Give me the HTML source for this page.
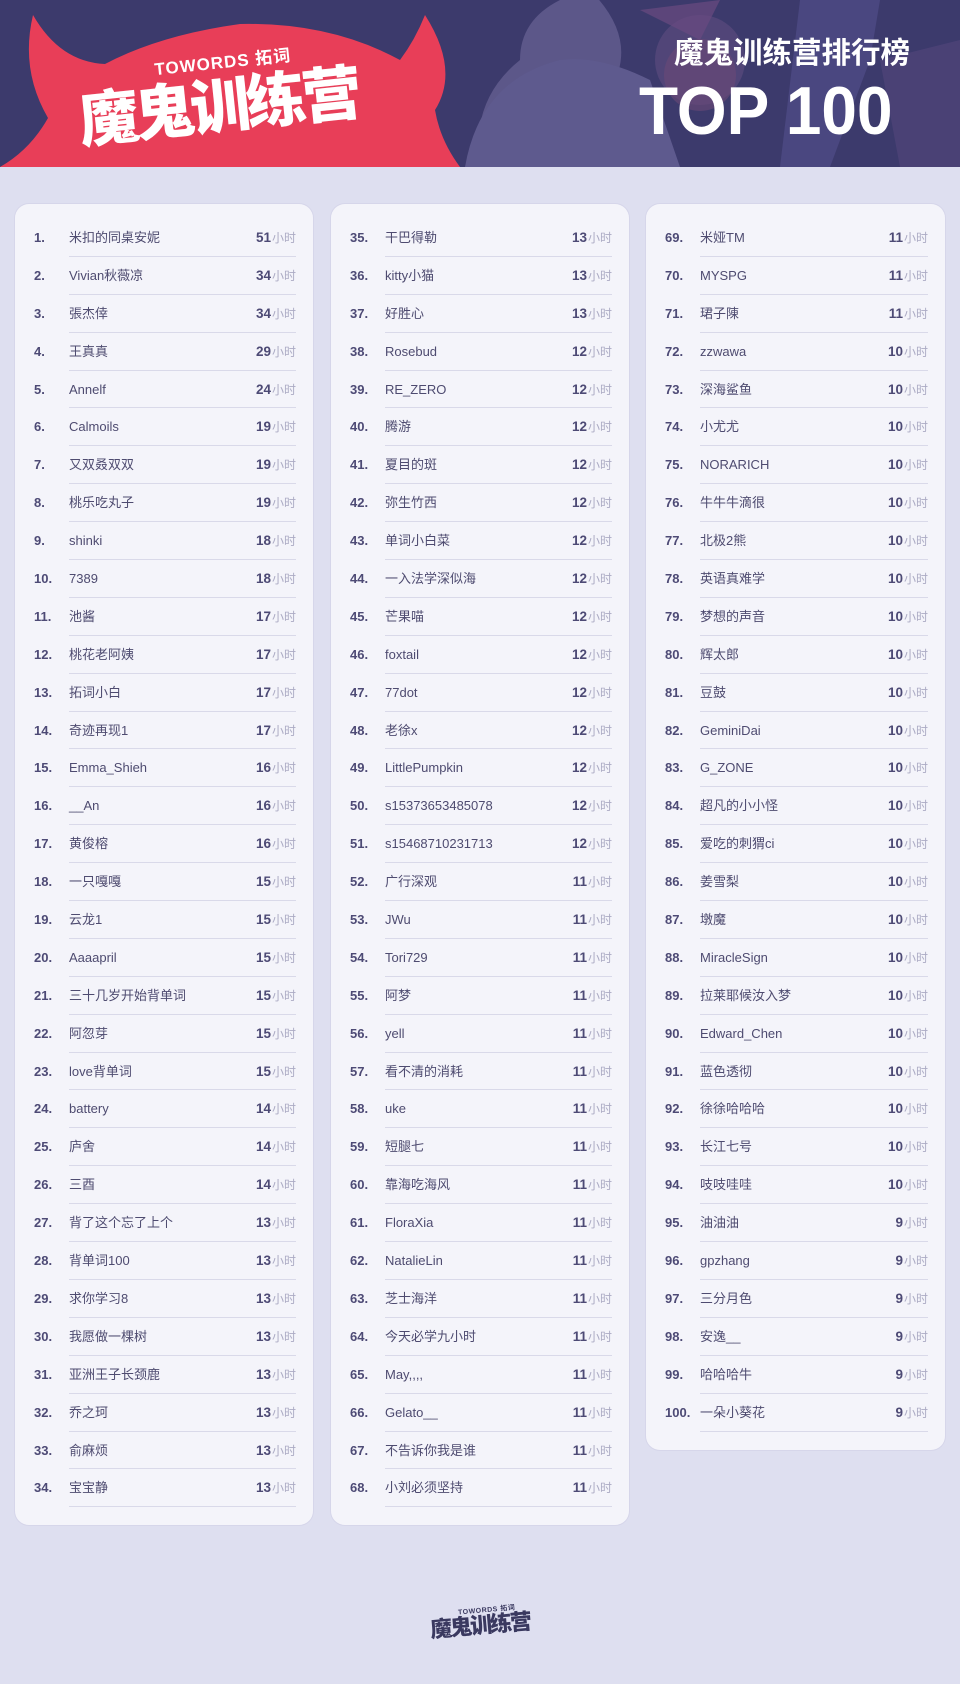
<!DOCTYPE html>
<html><head><meta charset="utf-8">
<style>
*{margin:0;padding:0;box-sizing:border-box}
body{width:960px;height:1684px;background:#dedff0;font-family:"Liberation Sans","Noto Sans CJK SC",sans-serif;position:relative;overflow:hidden}
.hdr{position:absolute;left:0;top:0;width:960px;height:167px;background:#3c3a6c;overflow:hidden}
.card{position:absolute;top:204px;background:#f4f4fa;border-radius:14px;padding-top:15px;box-shadow:0 0 0 1px #d6d6ea}
.r{height:37.9px;position:relative}
.n{position:absolute;left:19px;top:0;line-height:37.9px;font-size:13px;font-weight:bold;color:#4d4a75}
.m{position:absolute;left:54px;right:17px;top:0;height:37.9px;line-height:37.9px;font-size:13px;color:#4e4b70;border-bottom:1px solid #d9d9e9}
.h{position:absolute;right:0;top:0;font-size:13.5px;font-weight:bold;color:#4d4a75}
.h i{font-style:normal;font-weight:normal;font-size:12px;color:#acabc4;margin-left:1px}
</style></head><body>
<div class="hdr">
<svg width="960" height="167" style="position:absolute;left:0;top:0">
<circle cx="700" cy="60" r="45" fill="#5a4a7e" opacity=".7"/>
<circle cx="700" cy="75" r="36" fill="#6b4a77" opacity=".6"/>
<path d="M560 0 L590 -10 Q640 40 610 90 L640 167 L480 167 Q470 100 520 60 Q520 20 560 0Z" fill="#5c5789"/>
<path d="M465 167 Q480 80 560 60 Q600 55 650 80 L680 167Z" fill="#5e5a8e"/>
<path d="M800 0 L880 0 L870 60 L830 167 L780 167Z" fill="#4a4780"/>
<path d="M880 60 L960 40 L960 167 L900 167Z" fill="#4d4478" opacity=".8"/>
<path d="M640 10 L720 0 L700 40Z" fill="#6a4a80" opacity=".7"/>
<path d="M33 15 Q60 62 105 64 Q160 35 240 24 Q330 22 400 60 Q415 40 425 15 Q460 70 435 110 Q440 140 460 167 L0 167 Q30 150 48 118 Q20 70 33 15Z" fill="#e83e58"/>
</svg>
<div style="position:absolute;left:154px;top:48px;transform:rotate(-6deg);color:#fff;font-weight:bold;font-size:17px;letter-spacing:1px">TOWORDS 拓词</div>
<div style="position:absolute;left:78px;top:68px;transform:rotate(-6deg);color:#fff;font-weight:900;font-size:60px;line-height:70px;font-family:'Noto Sans CJK SC',sans-serif;letter-spacing:-4px">魔鬼训练营</div>
<div style="position:absolute;left:674px;top:32px;color:#fff;font-weight:bold;font-size:29.5px;line-height:38px;font-family:'Noto Sans CJK SC',sans-serif">魔鬼训练营排行榜</div>
<div style="position:absolute;left:639px;top:76px;color:#fff;font-weight:900;font-size:68px;line-height:70px;font-family:'Liberation Sans',sans-serif;letter-spacing:0;transform:scaleX(0.94);transform-origin:left">TOP 100</div>
</div>

<div class="card" style="left:15px;width:298px;height:1321px">
<div class="r"><span class="n">1.</span><div class="m">米扣的同桌安妮<span class="h">51<i>小时</i></span></div></div>
<div class="r"><span class="n">2.</span><div class="m">Vivian秋薇凉<span class="h">34<i>小时</i></span></div></div>
<div class="r"><span class="n">3.</span><div class="m">張杰倖<span class="h">34<i>小时</i></span></div></div>
<div class="r"><span class="n">4.</span><div class="m">王真真<span class="h">29<i>小时</i></span></div></div>
<div class="r"><span class="n">5.</span><div class="m">Annelf<span class="h">24<i>小时</i></span></div></div>
<div class="r"><span class="n">6.</span><div class="m">Calmoils<span class="h">19<i>小时</i></span></div></div>
<div class="r"><span class="n">7.</span><div class="m">又双叒双双<span class="h">19<i>小时</i></span></div></div>
<div class="r"><span class="n">8.</span><div class="m">桃乐吃丸子<span class="h">19<i>小时</i></span></div></div>
<div class="r"><span class="n">9.</span><div class="m">shinki<span class="h">18<i>小时</i></span></div></div>
<div class="r"><span class="n">10.</span><div class="m">7389<span class="h">18<i>小时</i></span></div></div>
<div class="r"><span class="n">11.</span><div class="m">池酱<span class="h">17<i>小时</i></span></div></div>
<div class="r"><span class="n">12.</span><div class="m">桃花老阿姨<span class="h">17<i>小时</i></span></div></div>
<div class="r"><span class="n">13.</span><div class="m">拓词小白<span class="h">17<i>小时</i></span></div></div>
<div class="r"><span class="n">14.</span><div class="m">奇迹再现1<span class="h">17<i>小时</i></span></div></div>
<div class="r"><span class="n">15.</span><div class="m">Emma_Shieh<span class="h">16<i>小时</i></span></div></div>
<div class="r"><span class="n">16.</span><div class="m">__An<span class="h">16<i>小时</i></span></div></div>
<div class="r"><span class="n">17.</span><div class="m">黄俊榕<span class="h">16<i>小时</i></span></div></div>
<div class="r"><span class="n">18.</span><div class="m">一只嘎嘎<span class="h">15<i>小时</i></span></div></div>
<div class="r"><span class="n">19.</span><div class="m">云龙1<span class="h">15<i>小时</i></span></div></div>
<div class="r"><span class="n">20.</span><div class="m">Aaaapril<span class="h">15<i>小时</i></span></div></div>
<div class="r"><span class="n">21.</span><div class="m">三十几岁开始背单词<span class="h">15<i>小时</i></span></div></div>
<div class="r"><span class="n">22.</span><div class="m">阿忽芽<span class="h">15<i>小时</i></span></div></div>
<div class="r"><span class="n">23.</span><div class="m">love背单词<span class="h">15<i>小时</i></span></div></div>
<div class="r"><span class="n">24.</span><div class="m">battery<span class="h">14<i>小时</i></span></div></div>
<div class="r"><span class="n">25.</span><div class="m">庐舍<span class="h">14<i>小时</i></span></div></div>
<div class="r"><span class="n">26.</span><div class="m">三酉<span class="h">14<i>小时</i></span></div></div>
<div class="r"><span class="n">27.</span><div class="m">背了这个忘了上个<span class="h">13<i>小时</i></span></div></div>
<div class="r"><span class="n">28.</span><div class="m">背单词100<span class="h">13<i>小时</i></span></div></div>
<div class="r"><span class="n">29.</span><div class="m">求你学习8<span class="h">13<i>小时</i></span></div></div>
<div class="r"><span class="n">30.</span><div class="m">我愿做一棵树<span class="h">13<i>小时</i></span></div></div>
<div class="r"><span class="n">31.</span><div class="m">亚洲王子长颈鹿<span class="h">13<i>小时</i></span></div></div>
<div class="r"><span class="n">32.</span><div class="m">乔之珂<span class="h">13<i>小时</i></span></div></div>
<div class="r"><span class="n">33.</span><div class="m">俞麻烦<span class="h">13<i>小时</i></span></div></div>
<div class="r"><span class="n">34.</span><div class="m">宝宝静<span class="h">13<i>小时</i></span></div></div>
</div>

<div class="card" style="left:331px;width:298px;height:1321px">
<div class="r"><span class="n">35.</span><div class="m">干巴得勒<span class="h">13<i>小时</i></span></div></div>
<div class="r"><span class="n">36.</span><div class="m">kitty小猫<span class="h">13<i>小时</i></span></div></div>
<div class="r"><span class="n">37.</span><div class="m">好胜心<span class="h">13<i>小时</i></span></div></div>
<div class="r"><span class="n">38.</span><div class="m">Rosebud<span class="h">12<i>小时</i></span></div></div>
<div class="r"><span class="n">39.</span><div class="m">RE_ZERO<span class="h">12<i>小时</i></span></div></div>
<div class="r"><span class="n">40.</span><div class="m">腾游<span class="h">12<i>小时</i></span></div></div>
<div class="r"><span class="n">41.</span><div class="m">夏目的斑<span class="h">12<i>小时</i></span></div></div>
<div class="r"><span class="n">42.</span><div class="m">弥生竹西<span class="h">12<i>小时</i></span></div></div>
<div class="r"><span class="n">43.</span><div class="m">单词小白菜<span class="h">12<i>小时</i></span></div></div>
<div class="r"><span class="n">44.</span><div class="m">一入法学深似海<span class="h">12<i>小时</i></span></div></div>
<div class="r"><span class="n">45.</span><div class="m">芒果喵<span class="h">12<i>小时</i></span></div></div>
<div class="r"><span class="n">46.</span><div class="m">foxtail<span class="h">12<i>小时</i></span></div></div>
<div class="r"><span class="n">47.</span><div class="m">77dot<span class="h">12<i>小时</i></span></div></div>
<div class="r"><span class="n">48.</span><div class="m">老徐x<span class="h">12<i>小时</i></span></div></div>
<div class="r"><span class="n">49.</span><div class="m">LittlePumpkin<span class="h">12<i>小时</i></span></div></div>
<div class="r"><span class="n">50.</span><div class="m">s15373653485078<span class="h">12<i>小时</i></span></div></div>
<div class="r"><span class="n">51.</span><div class="m">s15468710231713<span class="h">12<i>小时</i></span></div></div>
<div class="r"><span class="n">52.</span><div class="m">广行深观<span class="h">11<i>小时</i></span></div></div>
<div class="r"><span class="n">53.</span><div class="m">JWu<span class="h">11<i>小时</i></span></div></div>
<div class="r"><span class="n">54.</span><div class="m">Tori729<span class="h">11<i>小时</i></span></div></div>
<div class="r"><span class="n">55.</span><div class="m">阿梦<span class="h">11<i>小时</i></span></div></div>
<div class="r"><span class="n">56.</span><div class="m">yell<span class="h">11<i>小时</i></span></div></div>
<div class="r"><span class="n">57.</span><div class="m">看不清的消耗<span class="h">11<i>小时</i></span></div></div>
<div class="r"><span class="n">58.</span><div class="m">uke<span class="h">11<i>小时</i></span></div></div>
<div class="r"><span class="n">59.</span><div class="m">短腿七<span class="h">11<i>小时</i></span></div></div>
<div class="r"><span class="n">60.</span><div class="m">靠海吃海风<span class="h">11<i>小时</i></span></div></div>
<div class="r"><span class="n">61.</span><div class="m">FloraXia<span class="h">11<i>小时</i></span></div></div>
<div class="r"><span class="n">62.</span><div class="m">NatalieLin<span class="h">11<i>小时</i></span></div></div>
<div class="r"><span class="n">63.</span><div class="m">芝士海洋<span class="h">11<i>小时</i></span></div></div>
<div class="r"><span class="n">64.</span><div class="m">今天必学九小时<span class="h">11<i>小时</i></span></div></div>
<div class="r"><span class="n">65.</span><div class="m">May,,,,<span class="h">11<i>小时</i></span></div></div>
<div class="r"><span class="n">66.</span><div class="m">Gelato__<span class="h">11<i>小时</i></span></div></div>
<div class="r"><span class="n">67.</span><div class="m">不告诉你我是谁<span class="h">11<i>小时</i></span></div></div>
<div class="r"><span class="n">68.</span><div class="m">小刘必须坚持<span class="h">11<i>小时</i></span></div></div>
</div>

<div class="card" style="left:646px;width:299px;height:1246px">
<div class="r"><span class="n">69.</span><div class="m">米娅TM<span class="h">11<i>小时</i></span></div></div>
<div class="r"><span class="n">70.</span><div class="m">MYSPG<span class="h">11<i>小时</i></span></div></div>
<div class="r"><span class="n">71.</span><div class="m">珺子陳<span class="h">11<i>小时</i></span></div></div>
<div class="r"><span class="n">72.</span><div class="m">zzwawa<span class="h">10<i>小时</i></span></div></div>
<div class="r"><span class="n">73.</span><div class="m">深海鲨鱼<span class="h">10<i>小时</i></span></div></div>
<div class="r"><span class="n">74.</span><div class="m">小尤尤<span class="h">10<i>小时</i></span></div></div>
<div class="r"><span class="n">75.</span><div class="m">NORARICH<span class="h">10<i>小时</i></span></div></div>
<div class="r"><span class="n">76.</span><div class="m">牛牛牛滴很<span class="h">10<i>小时</i></span></div></div>
<div class="r"><span class="n">77.</span><div class="m">北极2熊<span class="h">10<i>小时</i></span></div></div>
<div class="r"><span class="n">78.</span><div class="m">英语真难学<span class="h">10<i>小时</i></span></div></div>
<div class="r"><span class="n">79.</span><div class="m">梦想的声音<span class="h">10<i>小时</i></span></div></div>
<div class="r"><span class="n">80.</span><div class="m">辉太郎<span class="h">10<i>小时</i></span></div></div>
<div class="r"><span class="n">81.</span><div class="m">豆鼓<span class="h">10<i>小时</i></span></div></div>
<div class="r"><span class="n">82.</span><div class="m">GeminiDai<span class="h">10<i>小时</i></span></div></div>
<div class="r"><span class="n">83.</span><div class="m">G_ZONE<span class="h">10<i>小时</i></span></div></div>
<div class="r"><span class="n">84.</span><div class="m">超凡的小小怪<span class="h">10<i>小时</i></span></div></div>
<div class="r"><span class="n">85.</span><div class="m">爱吃的刺猬ci<span class="h">10<i>小时</i></span></div></div>
<div class="r"><span class="n">86.</span><div class="m">姜雪梨<span class="h">10<i>小时</i></span></div></div>
<div class="r"><span class="n">87.</span><div class="m">墩魔<span class="h">10<i>小时</i></span></div></div>
<div class="r"><span class="n">88.</span><div class="m">MiracleSign<span class="h">10<i>小时</i></span></div></div>
<div class="r"><span class="n">89.</span><div class="m">拉莱耶候汝入梦<span class="h">10<i>小时</i></span></div></div>
<div class="r"><span class="n">90.</span><div class="m">Edward_Chen<span class="h">10<i>小时</i></span></div></div>
<div class="r"><span class="n">91.</span><div class="m">蓝色透彻<span class="h">10<i>小时</i></span></div></div>
<div class="r"><span class="n">92.</span><div class="m">徐徐哈哈哈<span class="h">10<i>小时</i></span></div></div>
<div class="r"><span class="n">93.</span><div class="m">长江七号<span class="h">10<i>小时</i></span></div></div>
<div class="r"><span class="n">94.</span><div class="m">吱吱哇哇<span class="h">10<i>小时</i></span></div></div>
<div class="r"><span class="n">95.</span><div class="m">油油油<span class="h">9<i>小时</i></span></div></div>
<div class="r"><span class="n">96.</span><div class="m">gpzhang<span class="h">9<i>小时</i></span></div></div>
<div class="r"><span class="n">97.</span><div class="m">三分月色<span class="h">9<i>小时</i></span></div></div>
<div class="r"><span class="n">98.</span><div class="m">安逸__<span class="h">9<i>小时</i></span></div></div>
<div class="r"><span class="n">99.</span><div class="m">哈哈哈牛<span class="h">9<i>小时</i></span></div></div>
<div class="r"><span class="n">100.</span><div class="m">一朵小葵花<span class="h">9<i>小时</i></span></div></div>
</div>

<div style="position:absolute;left:458px;top:1605px;transform:rotate(-5deg);color:#3a3960;font-weight:bold;font-size:7px;letter-spacing:.5px">TOWORDS 拓词</div>
<div style="position:absolute;left:430px;top:1610px;transform:rotate(-5deg);color:#3a3960;font-weight:900;font-size:22px;line-height:28px;font-family:'Noto Sans CJK SC',sans-serif;letter-spacing:-2px">魔鬼训练营</div>
</body></html>
